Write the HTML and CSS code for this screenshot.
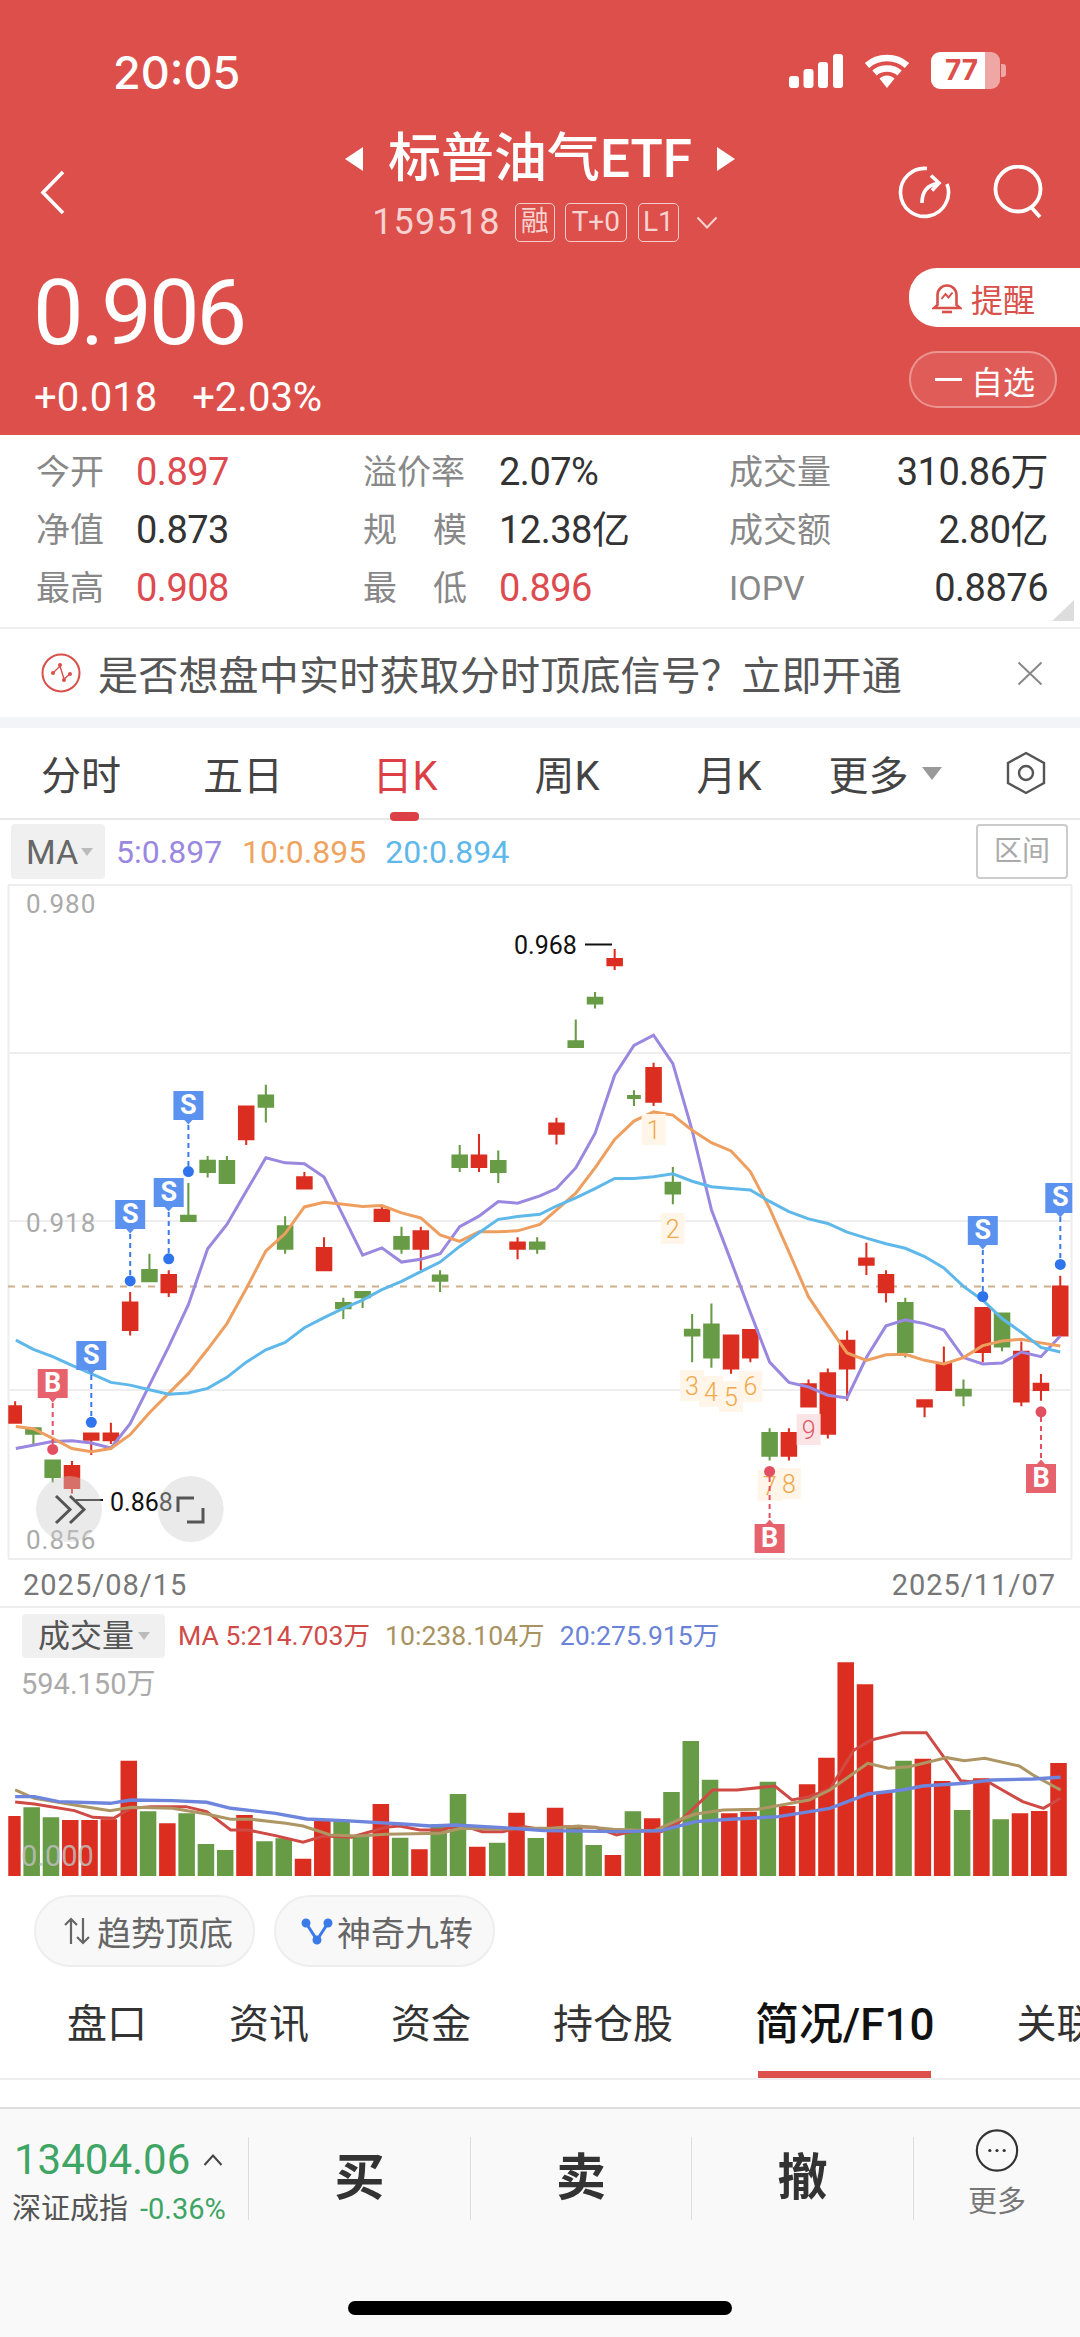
FILE: index.html
```html
<!DOCTYPE html>
<html lang="zh-CN">
<head>
  <meta charset="UTF-8">
  <meta name="viewport" content="width=device-width, initial-scale=1.0">
  <title>标普油气ETF</title>
  <link rel="stylesheet" href="styles.css">
</head>
<body>
  <div class="page">
    <header class="top">
      <div class="status">
        <span class="time">20:05</span>
        <div class="status-icons">
          <svg class="signal" width="54" height="34" viewBox="0 0 54 34"><rect x="0" y="22" width="10" height="12" rx="3"/><rect x="14.5" y="15" width="10" height="19" rx="3"/><rect x="29" y="8" width="10" height="26" rx="3"/><rect x="44" y="0" width="10" height="34" rx="3"/></svg>
          <svg class="wifi" width="46" height="34" viewBox="0 0 46 34"><path d="M3 11.5C14 1.5 32 1.5 43 11.5M10.5 19C17 13 29 13 35.5 19" fill="none" stroke="#fff" stroke-width="6.5"/><path d="M15.5 24.5C20 20.5 26 20.5 30.5 24.5L23 34z" fill="#fff"/></svg>
          <div class="battery"><span class="battery-num">77</span></div>
          <span class="battery-nub"></span>
        </div>
      </div>

      <div class="nav">
        <svg class="back" width="26" height="45" viewBox="0 0 26 45"><path d="M23 2L3 22.5 23 43" fill="none" stroke="#fff" stroke-width="3.6"/></svg>
        <div class="nav-center">
          <div class="title-row">
            <span class="tri tri-left"></span>
            <h1 class="title">标普油气ETF</h1>
            <span class="tri tri-right"></span>
          </div>
          <div class="code-row">
            <span class="code">159518</span>
            <span class="tag tag-rong">融</span>
            <span class="tag tag-t0">T+0</span>
            <span class="tag tag-l1">L1</span>
            <svg class="code-arrow" width="22" height="13" viewBox="0 0 22 13"><path d="M1.5 1.5L11 11.5 20.5 1.5" fill="none" stroke="#fff" stroke-opacity=".75" stroke-width="2"/></svg>
          </div>
        </div>
        <div class="nav-actions">
          <svg width="54" height="54" viewBox="0 0 54 54" fill="none" stroke="#fff" stroke-width="3.6"><path d="M30 3.5A24 24 0 1 0 50 19"/><path d="M25 38C25 27 30 20 41 18.5M34 10.5L42 18 35 25.5"/></svg>
          <svg width="54" height="54" viewBox="0 0 54 54" fill="none" stroke="#fff" stroke-width="3.8"><circle cx="26" cy="24" r="22.5"/><path d="M39 42L48 52"/></svg>
        </div>
      </div>

      <div class="quote">
        <div class="quote-left">
          <div class="price">0.906</div>
          <div class="change"><span>+0.018</span><span>+2.03%</span></div>
        </div>
        <div class="quote-right">
          <div class="btn-remind">
            <svg width="30" height="32" viewBox="0 0 30 32" fill="none" stroke="#d94f4a" stroke-width="2.6"><path d="M5.5 23V13a9.5 9.5 0 0 1 19 0v10l3.5 3H2z"/><path d="M10 30h10"/><path d="M9.5 17l4-5 3 3.500 4-5" stroke-width="2"/></svg>
            <span>提醒</span>
          </div>
          <div class="btn-watch"><span class="watch-dash"></span><span>自选</span></div>
        </div>
      </div>
    </header>

    <section class="stats">
      <div class="stat"><span class="stat-label">今开</span><span class="stat-val up">0.897</span></div>
      <div class="stat stat-mid"><span class="stat-label">溢价率</span><span class="stat-val">2.07%</span></div>
      <div class="stat stat-right"><span class="stat-label">成交量</span><span class="stat-val">310.86万</span></div>
      <div class="stat"><span class="stat-label">净值</span><span class="stat-val">0.873</span></div>
      <div class="stat stat-mid"><span class="stat-label spread"><i>规</i><i>模</i></span><span class="stat-val">12.38亿</span></div>
      <div class="stat stat-right"><span class="stat-label">成交额</span><span class="stat-val">2.80亿</span></div>
      <div class="stat"><span class="stat-label">最高</span><span class="stat-val up">0.908</span></div>
      <div class="stat stat-mid"><span class="stat-label spread"><i>最</i><i>低</i></span><span class="stat-val up">0.896</span></div>
      <div class="stat stat-right"><span class="stat-label">IOPV</span><span class="stat-val">0.8876</span></div>
      <span class="corner"></span>
    </section>

    <section class="notice">
      <svg width="40" height="40" viewBox="0 0 40 40" fill="none" stroke="#d94f4a" stroke-width="2"><circle cx="20" cy="20" r="18.500"/><path d="M12 20l7-7 4 13 6-5" stroke-width="1.400"/><circle cx="12" cy="20" r="2" fill="#d94f4a" stroke="none"/><circle cx="19" cy="12" r="2" fill="#d94f4a" stroke="none"/><circle cx="23" cy="27" r="2" fill="#d94f4a" stroke="none"/><circle cx="29" cy="21" r="2" fill="#d94f4a" stroke="none"/></svg>
      <span class="notice-text">是否想盘中实时获取分时顶底信号？立即开通</span>
      <svg class="notice-close" width="26" height="25" viewBox="0 0 26 25"><path d="M1.500 1.500L24.500 23.500M24.500 1.500L1.500 23.500" fill="none" stroke="#888" stroke-width="2"/></svg>
    </section>

    <div class="band"></div>

    <nav class="periods">
      <span>分时</span>
      <span>五日</span>
      <span class="period-on">日K</span>
      <span>周K</span>
      <span>月K</span>
      <span class="period-more">更多<i class="tri-down"></i></span>
      <svg class="period-gear" width="42" height="44" viewBox="0 0 42 44" fill="none" stroke="#555" stroke-width="2.400"><path d="M21 2L39 12V32L21 42 3 32V12z"/><circle cx="21" cy="22" r="7"/></svg>
    </nav>

    <div class="ma-row">
      <div class="ma-box">MA<i class="tri-small"></i></div>
      <span class="ma5">5:0.897</span>
      <span class="ma10">10:0.895</span>
      <span class="ma20">20:0.894</span>
      <div class="range-btn">区间</div>
    </div>

    <svg class="kline" width="1080" height="680" viewBox="0 880 1080 680">
      <!-- grid -->
      <path class="grid" d="M8 885H1072M8 1053H1072M8 1221H1072M8 1390H1072M8 1559H1072M8.500 885V1559M1071.500 885V1559"/>
      <path class="last-close" d="M8 1286.500H1072"/>

      <!-- candles and MA lines, in sampled coordinates -->
      <g transform="translate(0 880) scale(.34435 .4592)">
        <path class="candle-red" d="M24 1144h40v40h-40zM41 1135h6v49h-6zM185 1274h48v52h-48zM206 1265h6v71h-6zM241 1203h48v18h-48zM262 1203h6v49h-6zM298 1203h48v19h-48zM319 1182h6v46h-6zM354 918h48v64h-48zM375 897h6v95h-6zM466 858h48v42h-48zM487 850h6v58h-6zM691 491h48v76h-48zM712 491h6v86h-6zM860 645h48v29h-48zM881 636h6v38h-6zM917 799h48v53h-48zM938 778h6v74h-6zM1085 716h48v29h-48zM1106 711h6v34h-6zM1198 763h48v42h-48zM1219 755h6v95h-6zM1367 598h48v29h-48zM1388 553h6v83h-6zM1479 787h48v18h-48zM1500 778h6v48h-6zM1592 528h48v27h-48zM1613 518h6v58h-6zM1761 170h48v18h-48zM1782 150h6v46h-6zM1874 407h48v78h-48zM1895 398h6v94h-6zM2099 990h48v76h-48zM2120 990h6v85h-6zM2155 978h48v64h-48zM2176 978h6v72h-6zM2267 1202h48v54h-48zM2288 1194h6v70h-6zM2324 1096h48v53h-48zM2345 1088h6v61h-6zM2380 1072h48v136h-48zM2401 1064h6v152h-6zM2436 1001h48v65h-48zM2457 981h6v153h-6zM2492 822h48v18h-48zM2513 790h6v70h-6zM2549 858h48v42h-48zM2570 850h6v70h-6zM2661 1131h48v18h-48zM2682 1131h6v39h-6zM2717 1052h48v61h-48zM2738 1016h6v97h-6zM2830 930h48v100h-48zM2851 930h6v120h-6zM2942 1025h48v113h-48zM2963 1005h6v141h-6zM2999 1095h48v18h-48zM3020 1076h6v58h-6zM3055 883h48v111h-48zM3076 862h6v132h-6z"/>
        <path class="candle-green" d="M73 1192h48v16h-48zM94 1192h6v36h-6zM129 1262h48v40h-48zM150 1262h6v50h-6zM410 847h48v29h-48zM431 814h6v62h-6zM523 729h48v16h-48zM544 660h6v85h-6zM579 609h48v29h-48zM600 601h6v47h-6zM635 610h48v52h-48zM656 601h6v61h-6zM748 467h48v29h-48zM769 446h6v82h-6zM804 752h48v53h-48zM825 732h6v82h-6zM973 919h48v16h-48zM994 910h6v46h-6zM1029 895h48v16h-48zM1050 895h6v37h-6zM1142 775h48v30h-48zM1163 755h6v59h-6zM1254 859h48v16h-48zM1275 850h6v47h-6zM1311 598h48v29h-48zM1332 577h6v59h-6zM1423 610h48v28h-48zM1444 589h6v71h-6zM1536 787h48v18h-48zM1557 778h6v36h-6zM1648 349h48v17h-48zM1669 304h6v62h-6zM1704 254h48v17h-48zM1725 244h6v36h-6zM1821 468h40v9h-40zM1838 458h6v34h-6zM1930 657h48v28h-48zM1951 625h6v81h-6zM1986 977h48v17h-48zM2007 945h6v105h-6zM2042 966h48v76h-48zM2063 922h6v140h-6zM2211 1202h48v54h-48zM2232 1194h6v70h-6zM2605 919h48v111h-48zM2626 910h6v130h-6zM2774 1108h48v17h-48zM2795 1088h6v58h-6zM2886 942h48v76h-48zM2907 942h6v84h-6z"/>
        <polyline class="line line-ma5" points="46,1238 152,1223 209,1221 265,1226 322,1237 378,1184 434,1100 490,1016 547,925 603,803 659,750 715,678 772,605 828,616 884,618 941,647 997,732 1053,817 1109,801 1166,832 1222,826 1278,814 1335,755 1391,732 1447,700 1503,704 1568,688 1616,672 1672,627 1728,552 1785,425 1841,360 1898,338 1954,400 2010,545 2066,718 2123,830 2179,942 2235,1050 2291,1094 2348,1104 2404,1122 2460,1128 2516,1040 2573,971 2629,958 2685,966 2741,980 2798,1040 2854,1054 2910,1052 2966,1028 3023,1038 3079,993"/>
        <polyline class="line line-ma10" points="46,1190 97,1195 153,1216 209,1238 265,1245 322,1238 378,1208 434,1160 490,1118 547,1075 603,1022 659,966 715,890 772,808 828,770 884,712 941,702 997,706 1053,711 1109,709 1166,725 1222,736 1278,773 1335,787 1391,766 1447,766 1503,764 1568,750 1672,682 1728,627 1785,565 1841,525 1898,505 1954,512 2010,545 2066,572 2123,590 2179,635 2235,715 2291,810 2348,908 2404,970 2460,1030 2516,1046 2573,1034 2629,1033 2685,1046 2741,1054 2798,1040 2854,1014 2910,1004 2966,1000 3023,1008 3079,1015"/>
        <polyline class="line line-ma20" points="46,1002 97,1022 153,1038 209,1057 265,1075 322,1094 378,1100 434,1110 490,1120 547,1117 603,1107 659,1083 715,1050 772,1023 828,1007 884,975 941,953 997,933 1053,915 1109,892 1166,874 1222,853 1278,832 1335,798 1391,768 1447,739 1503,733 1568,728 1616,710 1672,692 1728,672 1785,650 1841,650 1898,646 1954,640 2010,656 2066,668 2123,672 2179,675 2235,700 2291,722 2348,738 2404,748 2460,767 2516,780 2573,792 2629,802 2685,820 2741,845 2798,885 2854,915 2910,955 2966,985 3023,1018 3079,1028"/>
      </g>

      <!-- axis labels -->
      <text class="axis" x="26" y="913">0.980</text>
      <text class="axis" x="26" y="1232">0.918</text>
      <text class="axis" x="26" y="1549">0.856</text>

      <!-- sequence numbers -->
      <g class="seq">
        <rect x="641.600" y="1114" width="24" height="31"/><text x="653.600" y="1139">1</text>
        <rect x="660.600" y="1213" width="24" height="31"/><text x="672.600" y="1238">2</text>
        <rect x="680" y="1370" width="24" height="31"/><text x="692" y="1395">3</text>
        <rect x="699" y="1376" width="24" height="31"/><text x="711" y="1401">4</text>
        <rect x="719" y="1381" width="24" height="31"/><text x="731" y="1406">5</text>
        <rect x="738.400" y="1371" width="24" height="31"/><text x="750.400" y="1395">6</text>
        <rect x="757.600" y="1470" width="24" height="31"/><text x="769.600" y="1495">7</text>
        <rect x="777" y="1468" width="24" height="31"/><text x="789" y="1493">8</text>
      </g>
      <g class="seq seq-red"><rect x="796.600" y="1414" width="24" height="31"/><text x="808.600" y="1439">9</text></g>

      <!-- sell flags -->
      <path class="dash-s" d="M91.300 1375V1417M130.200 1234V1276M168.700 1212V1254M188.400 1125V1167M982.800 1250V1292M1060.300 1217V1259"/>
      <g class="dot-s"><circle cx="91.300" cy="1422.300" r="5.500"/><circle cx="130.200" cy="1280.900" r="5.500"/><circle cx="168.700" cy="1258.800" r="5.500"/><circle cx="188.400" cy="1171.600" r="5.500"/><circle cx="982.800" cy="1296.500" r="5.500"/><circle cx="1060.300" cy="1264.400" r="5.500"/></g>
      <g class="flag-s" transform="translate(91.300 1341)"><path d="M-15 0h30v29h-11l-4 4.500-4-4.500h-11z"/><text y="23">S</text></g>
      <g class="flag-s" transform="translate(130.200 1200)"><path d="M-15 0h30v29h-11l-4 4.500-4-4.500h-11z"/><text y="23">S</text></g>
      <g class="flag-s" transform="translate(168.700 1178)"><path d="M-15 0h30v29h-11l-4 4.500-4-4.500h-11z"/><text y="23">S</text></g>
      <g class="flag-s" transform="translate(188.400 1091)"><path d="M-15 0h30v29h-11l-4 4.500-4-4.500h-11z"/><text y="23">S</text></g>
      <g class="flag-s" transform="translate(982.800 1216)"><path d="M-15 0h30v29h-11l-4 4.500-4-4.500h-11z"/><text y="23">S</text></g>
      <g class="flag-s" transform="translate(1060.300 1183)"><path d="M-15 0h27v30h-8l-4 4.500-4-4.500h-11z"/><text y="23">S</text></g>

      <!-- buy flags -->
      <path class="dash-b" d="M52.700 1403V1444M769.600 1477V1519M1041 1417V1459"/>
      <g class="dot-b"><circle cx="52.700" cy="1449.400" r="5.500"/><circle cx="769.600" cy="1471.400" r="5.500"/><circle cx="1041" cy="1411.800" r="5.500"/></g>
      <g class="flag-b" transform="translate(52.700 1369)"><path d="M-15 0h30v29h-11l-4 4.500-4-4.500h-11z"/><text y="23">B</text></g>
      <g class="flag-b" transform="translate(769.600 1524)"><path d="M-15 0h11l4-4.500 4 4.500h11v29h-30z"/><text y="23">B</text></g>
      <g class="flag-b" transform="translate(1041 1464)"><path d="M-15 0h11l4-4.500 4 4.500h11v29h-30z"/><text y="23">B</text></g>

      <!-- high and low -->
      <path class="hl-line" d="M585 944.500H612M76 1500H103"/>
      <text class="hl" x="514" y="954">0.968</text>
      <text class="hl" x="110" y="1511">0.868</text>

      <!-- round buttons -->
      <circle class="round-btn" cx="69" cy="1509" r="33"/>
      <circle class="round-btn" cx="190.700" cy="1509" r="33"/>
      <path class="round-icon" d="M56 1496L70 1509.500 56 1523M70 1496L84 1509.500 70 1523M178 1512V1498H194M203 1508V1522H187"/>
    </svg>

    <div class="date-row"><span>2025/08/15</span><span>2025/11/07</span></div>

    <div class="vol-row">
      <div class="vol-box">成交量<i class="tri-small"></i></div>
      <span class="vol-ma5">MA 5:214.703万</span>
      <span class="vol-ma10">10:238.104万</span>
      <span class="vol-ma20">20:275.915万</span>
    </div>

    <div class="vol-chart">
      <svg width="1080" height="218" viewBox="0 1660 1080 218">
        <g transform="translate(0 1590) scale(.6887 .3333)">
          <path class="candle-red" d="M12 678h18V858h-18zM90 690h24V858h-24zM118 690h24V858h-24zM146 688h24V858h-24zM175 512h24V858h-24zM231 700h24V858h-24zM343 675h24V858h-24zM428 806h24V858h-24zM456 688h24V858h-24zM541 642h24V858h-24zM597 778h24V858h-24zM681 770h24V858h-24zM738 668h24V858h-24zM794 653h24V858h-24zM878 795h24V858h-24zM935 685h24V858h-24zM1047 670h24V858h-24zM1075 665h24V858h-24zM1131 648h24V858h-24zM1160 583h24V858h-24zM1188 503h24V858h-24zM1216 217h24V858h-24zM1244 283h24V858h-24zM1272 605h24V858h-24zM1328 506h24V858h-24zM1356 573h24V858h-24zM1413 565h24V858h-24zM1469 670h24V858h-24zM1497 663h24V858h-24zM1525 519h24V858h-24z"/>
          <path class="candle-green" d="M34 652h24V858h-24zM62 682h24V858h-24zM203 664h24V858h-24zM259 670h24V858h-24zM287 762h24V858h-24zM315 780h24V858h-24zM372 754h24V858h-24zM400 745h24V858h-24zM484 692h24V858h-24zM512 735h24V858h-24zM569 743h24V858h-24zM625 703h24V858h-24zM653 612h24V858h-24zM710 758h24V858h-24zM766 744h24V858h-24zM822 712h24V858h-24zM850 765h24V858h-24zM907 664h24V858h-24zM963 606h24V858h-24zM991 453h24V858h-24zM1019 569h24V858h-24zM1103 575h24V858h-24zM1300 512h24V858h-24zM1385 660h24V858h-24zM1441 688h24V858h-24z"/>
          <polyline class="line line-vol5" points="22,636 50,642 108,662 135,682 165,685 190,655 220,650 270,650 300,665 335,720 360,720 400,737 440,757 470,738 510,742 560,712 580,708 610,720 640,720 670,705 700,725 730,725 760,710 790,720 820,710 865,712 895,735 925,722 960,725 985,698 1035,600 1070,600 1125,588 1150,630 1175,620 1205,597 1240,480 1265,450 1310,428 1345,428 1395,572 1410,575 1430,570 1485,635 1515,655 1540,625"/>
          <polyline class="line line-vol10" points="22,600 50,625 108,645 160,662 190,652 250,655 300,672 335,688 365,688 415,700 440,708 480,735 520,738 560,733 640,730 670,715 720,717 760,715 800,715 840,708 890,718 950,722 985,690 1010,672 1050,660 1100,658 1175,630 1205,600 1260,520 1290,535 1320,530 1375,503 1400,512 1430,505 1480,528 1500,555 1540,600"/>
          <polyline class="line line-vol20" points="22,620 50,620 85,635 160,640 190,630 250,632 300,637 335,655 400,670 445,687 500,692 590,703 625,708 660,705 730,713 790,722 900,725 960,722 1010,695 1060,688 1130,680 1205,655 1260,612 1310,600 1340,588 1400,580 1440,570 1500,567 1540,562"/>
        </g>
        <text class="vol-max" x="21" y="1694">594.150万</text>
        <text class="vol-min" x="21" y="1866">0.000</text>
      </svg>
    </div>

    <div class="chips">
      <div class="chip">
        <svg width="36" height="32" viewBox="0 0 36 32" fill="none" stroke="#666" stroke-width="2.200"><path d="M12 29V4M6 10L12 4 18 10M24 3V28M18 22L24 28 30 22"/></svg>
        <span>趋势顶底</span>
      </div>
      <div class="chip">
        <svg width="36" height="32" viewBox="0 0 36 32" fill="none" stroke="#3a7be8" stroke-width="3"><path d="M7 8L18 25 29 8"/><circle cx="7" cy="8" r="3" fill="#3a7be8"/><circle cx="18" cy="25" r="3" fill="#3a7be8"/><circle cx="29" cy="8" r="3" fill="#3a7be8"/></svg>
        <span>神奇九转</span>
      </div>
    </div>

    <nav class="tabs">
      <span>盘口</span>
      <span>资讯</span>
      <span>资金</span>
      <span>持仓股</span>
      <span class="tab-on">简况/F10</span>
      <span>关联</span>
    </nav>

    <div class="gap"></div>

    <footer class="footer">
      <div class="index">
        <div class="index-top"><span class="index-num">13404.06</span><svg width="20" height="12" viewBox="0 0 20 12"><path d="M1.500 11L10 1.500 18.500 11" fill="none" stroke="#444" stroke-width="2"/></svg></div>
        <div class="index-bottom"><span class="index-name">深证成指</span><span class="index-pct">-0.36%</span></div>
      </div>
      <div class="action">买</div>
      <div class="action">卖</div>
      <div class="action">撤</div>
      <div class="more">
        <svg width="48" height="48" viewBox="0 0 48 48"><circle cx="24" cy="24" r="22.500" fill="none" stroke="#333" stroke-width="2.400"/><circle cx="16" cy="24" r="1.800" fill="#333"/><circle cx="24" cy="24" r="1.800" fill="#333"/><circle cx="32" cy="24" r="1.800" fill="#333"/></svg>
        <span>更多</span>
      </div>
      <div class="home-bar"></div>
    </footer>
  </div>
</body>
</html>
```

FILE: styles.css
```css
* {
  box-sizing: border-box;
}
body {
  margin: 0;
  padding: 0;
  background-color: #fff;
  font-family: Roboto, "Noto Sans CJK SC", sans-serif;
}
i {
  font-style: normal;
}
.page {
  position: relative;
  width: 1080px;
  height: 2337px;
  overflow: hidden;
  display: flex;
  flex-direction: column;
}

/* red header */
.top {
  height: 435px;
  background-color: #dd4f4a;
  color: #fff;
}
.status {
  height: 125px;
  padding: 46px 74px 0 113px;
  display: flex;
  justify-content: space-between;
  align-items: flex-start;
}
.time {
  font-family: Inter, sans-serif;
  font-size: 45px;
  font-weight: 500;
  line-height: 54px;
}
.status-icons {
  display: flex;
  align-items: center;
  padding-top: 6px;
}
.signal {
  fill: #fff;
}
.wifi {
  margin-left: 21px;
}
.battery {
  width: 69px;
  height: 37px;
  margin-left: 21px;
  border-radius: 9px;
  background: linear-gradient(90deg, #fff 78%, rgba(255, 255, 255, 0.5) 78%);
  text-align: center;
}
.battery-num {
  font-family: Inter, sans-serif;
  display: block;
  font-size: 28px;
  font-weight: 700;
  line-height: 37px;
  color: #dd4f4a;
  padding-right: 8px;
}
.battery-nub {
  width: 5px;
  height: 13px;
  margin-left: 1px;
  border-radius: 0 3px 3px 0;
  background: rgba(255, 255, 255, 0.5);
}

.nav {
  height: 120px;
  display: grid;
  grid-template-columns: 1fr auto 1fr;
  align-items: start;
}
.back {
  margin: 45px 0 0 40px;
}
.nav-center {
  display: flex;
  flex-direction: column;
  align-items: center;
}
.title-row {
  display: flex;
  align-items: center;
  gap: 25px;
  height: 68px;
}
.title {
  margin: 0;
  font-size: 53px;
  font-weight: 500;
  line-height: 68px;
  white-space: nowrap;
}
.tri {
  width: 0;
  height: 0;
  border-top: 12px solid transparent;
  border-bottom: 12px solid transparent;
}
.tri-left {
  border-right: 18px solid #fff;
}
.tri-right {
  border-left: 18px solid #fff;
}
.code-row {
  display: flex;
  align-items: center;
  height: 40px;
  margin: 9px 0 0 10px;
  color: rgba(255, 255, 255, 0.75);
}
.code {
  font-size: 36px;
  letter-spacing: 1.200px;
  margin-right: 14px;
}
.tag {
  height: 39px;
  border: 1px solid rgba(255, 255, 255, 0.7);
  border-radius: 5px;
  font-size: 28px;
  line-height: 36px;
  text-align: center;
}
.tag-rong {
  width: 40px;
  margin-right: 10px;
}
.tag-t0 {
  width: 62px;
  margin-right: 11px;
}
.tag-l1 {
  width: 41px;
  margin-right: 17px;
}
.nav-actions {
  display: flex;
  justify-content: flex-end;
  gap: 41px;
  margin: 40px 34px 0 0;
}

.quote {
  display: flex;
  justify-content: space-between;
  padding: 23px 0 0 34px;
}
.price {
  margin: 2px 0 0 -1px;
  font-size: 90px;
  line-height: 88px;
  font-weight: 400;
  letter-spacing: -3px;
}
.change {
  display: flex;
  gap: 35px;
  margin-top: 17px;
  font-size: 40px;
  line-height: 46px;
}
.quote-right {
  width: 171px;
  display: flex;
  flex-direction: column;
}
.btn-remind {
  height: 59px;
  padding-left: 23px;
  display: flex;
  align-items: center;
  gap: 9px;
  background: #fff;
  border-radius: 28px 0 0 28px;
  color: #d94f4a;
  font-size: 32px;
}
.btn-watch {
  width: 148px;
  height: 57px;
  margin-top: 24px;
  padding-left: 24px;
  display: flex;
  align-items: center;
  gap: 9px;
  border: 2px solid rgba(255, 255, 255, 0.35);
  border-radius: 28px;
  background: rgba(255, 255, 255, 0.08);
  font-size: 32px;
}
.watch-dash {
  width: 27px;
  height: 3px;
  background: #fff;
}

/* stats */
.stats {
  position: relative;
  height: 194px;
  padding: 8px 32px 0 36px;
  display: grid;
  grid-template-columns: 327px 366px 319px;
  grid-auto-rows: 58px;
  align-items: center;
  border-bottom: 2px solid #eee;
}
.stat {
  display: flex;
  align-items: center;
}
.stat-label {
  width: 100px;
  font-size: 34px;
  color: #888;
  line-height: 44px;
}
.stat-mid .stat-label {
  width: 104px;
  margin-right: 32px;
}
.spread {
  display: flex;
  justify-content: space-between;
}
.stat-val {
  font-size: 38px;
  font-weight: 400;
  color: #333;
  line-height: 44px;
  letter-spacing: -0.500px;
}
.stat-right {
  justify-content: space-between;
}
.stat-right .stat-label {
  width: auto;
}
.up {
  color: #dd4a50;
}
.corner {
  position: absolute;
  right: 6px;
  bottom: 6px;
  width: 0;
  height: 0;
  border-left: 22px solid transparent;
  border-bottom: 21px solid #ddd;
}

/* notice */
.notice {
  height: 88px;
  padding: 0 37px 0 41px;
  display: flex;
  align-items: center;
}
.notice-text {
  margin-left: 17px;
  font-size: 40px;
  letter-spacing: 0.200px;
  color: #555;
  white-space: nowrap;
}
.notice-close {
  margin-left: auto;
}
.band {
  height: 11px;
  background-color: #f3f4f8;
}

/* period tabs */
.periods {
  position: relative;
  height: 92px;
  display: grid;
  grid-template-columns: repeat(6, 162px) 1fr;
  align-items: center;
  border-bottom: 2px solid #e8e8e8;
  font-size: 40px;
  color: #444;
  text-align: center;
}
.period-on {
  position: relative;
  color: #dd3f46;
}
.period-on::after {
  content: "";
  position: absolute;
  left: 66px;
  bottom: -19px;
  width: 29px;
  height: 9px;
  border-radius: 4px;
  background: #dd3f46;
}
.period-more {
  display: flex;
  align-items: center;
  justify-content: center;
  gap: 13px;
  margin-left: -12px;
}
.tri-down {
  width: 0;
  height: 0;
  border-left: 10px solid transparent;
  border-right: 10px solid transparent;
  border-top: 13px solid #999;
}
.period-gear {
  margin-left: 33px;
}

/* MA legend */
.ma-row {
  position: relative;
  height: 60px;
  padding: 4px 12px 0 11px;
  display: flex;
  align-items: flex-start;
  gap: 20px;
  font-size: 32px;
  line-height: 56px;
}
.ma-box {
  width: 94px;
  height: 55px;
  margin-right: -9px;
  padding-left: 15px;
  display: flex;
  align-items: center;
  gap: 3px;
  background: #f0f0f0;
  border-radius: 4px;
  color: #666;
  font-size: 34px;
}
.tri-small {
  width: 0;
  height: 0;
  border-left: 6px solid transparent;
  border-right: 6px solid transparent;
  border-top: 8px solid #bbb;
}
.ma5 {
  color: #9a87e0;
}
.ma10 {
  color: #eea45e;
}
.ma20 {
  color: #5eb8ea;
  margin-left: -1px;
}
.range-btn {
  width: 92px;
  height: 55px;
  margin-left: auto;
  border: 2px solid #ccc;
  border-radius: 4px;
  font-size: 28px;
  line-height: 51px;
  text-align: center;
  color: #aaa;
}

/* kline */
.kline {
  display: block;
  flex: none;
}
.kline text, .vol-chart text {
  font-family: Roboto, "Noto Sans CJK SC", sans-serif;
}
.grid {
  fill: none;
  stroke: #eee;
  stroke-width: 2;
}
.last-close {
  fill: none;
  stroke: #cdb08c;
  stroke-width: 2;
  stroke-dasharray: 7 7;
}
.candle-red {
  fill: #dc2e20;
}
.candle-green {
  fill: #679b46;
}
.line {
  fill: none;
  stroke-width: 3;
  vector-effect: non-scaling-stroke;
}
.line-ma5 {
  stroke: #9a87e0;
}
.line-ma10 {
  stroke: #ee9f60;
}
.line-ma20 {
  stroke: #5eb8ea;
}
.axis {
  font-size: 26px;
  letter-spacing: 1px;
  fill: #aaa;
}
.seq rect {
  fill: #fff5e8;
}
.seq text {
  font-size: 25px;
  font-weight: 300;
  fill: #f0a848;
  text-anchor: middle;
}
.seq-red rect {
  fill: #fbe4e6;
}
.seq-red text {
  fill: #e05a68;
}
.dash-s, .dash-b {
  fill: none;
  stroke-width: 2;
  stroke-dasharray: 5 4;
}
.dash-s {
  stroke: #3a7be8;
}
.dash-b {
  stroke: #e2505f;
}
.dot-s {
  fill: #2f74ec;
}
.dot-b {
  fill: #e2505f;
}
.flag-s path {
  fill: #5b92f0;
}
.flag-b path {
  fill: #e6636e;
}
.flag-s text, .flag-b text {
  font-size: 27px;
  font-weight: 700;
  fill: #fff;
  text-anchor: middle;
}
.hl-line {
  fill: none;
  stroke: #111;
  stroke-width: 2;
}
.hl {
  font-size: 25px;
  fill: #111;
}
.round-btn {
  fill: rgba(205, 205, 205, 0.42);
}
.round-icon {
  fill: none;
  stroke: #555;
  stroke-width: 3;
}

.date-row {
  height: 48px;
  padding: 8px 24px 0 23px;
  display: flex;
  justify-content: space-between;
  border-bottom: 2px solid #eee;
  font-size: 29px;
  line-height: 34px;
  letter-spacing: 1px;
  color: #777;
}

/* volume */
.vol-row {
  height: 52px;
  padding: 6px 0 0 22px;
  display: flex;
  align-items: flex-start;
  gap: 15px;
  font-size: 26.600px;
  line-height: 44px;
}
.vol-box {
  width: 143px;
  height: 44px;
  margin-right: -2px;
  padding-left: 16px;
  display: flex;
  align-items: center;
  gap: 4px;
  background: #f0f0f0;
  border-radius: 4px;
  color: #555;
  font-size: 32px;
}
.vol-ma5 {
  color: #d04b48;
}
.vol-ma10 {
  color: #a8925f;
}
.vol-ma20 {
  color: #6a82d8;
}
.vol-chart {
  height: 218px;
}
.vol-chart svg {
  display: block;
}
.line-vol5 {
  stroke: #cf4a44;
}
.line-vol10 {
  stroke: #ae9664;
}
.line-vol20 {
  stroke: #6d85dc;
  stroke-width: 3.400;
}
.vol-max {
  font-size: 29px;
  fill: #aaa;
}
.vol-min {
  font-size: 29px;
  fill: rgba(190, 190, 190, 0.85);
}

/* chips */
.chips {
  height: 89px;
  padding: 17px 0 0 34px;
  display: flex;
  gap: 19px;
}
.chip {
  width: 221px;
  height: 72px;
  padding-left: 23px;
  display: flex;
  align-items: center;
  gap: 2px;
  background: #f8f8f8;
  border: 2px solid #eee;
  border-radius: 36px;
  font-size: 34px;
  color: #666;
}

/* bottom tabs */
.tabs {
  height: 113px;
  padding: 31px 0 0 67px;
  display: flex;
  gap: 82px;
  align-items: flex-start;
  border-bottom: 2px solid #eee;
  font-size: 40px;
  line-height: 54px;
  color: #333;
  white-space: nowrap;
}
.tab-on {
  position: relative;
  color: #111;
  font-size: 44px;
  font-weight: 500;
}
.tab-on::after {
  content: "";
  position: absolute;
  left: 3px;
  right: 3px;
  top: 73px;
  height: 7px;
  background: #dd4f4a;
}
.gap {
  height: 27px;
}

/* footer */
.footer {
  position: relative;
  flex: 1;
  padding: 28px 0 0 0;
  display: grid;
  grid-template-columns: 248px 222px 221px 222px 1fr;
  grid-auto-rows: 83px;
  background: #f9f9f9;
  border-top: 2px solid #ddd;
}
.index {
  padding-left: 14px;
}
.index-top {
  display: flex;
  align-items: center;
  gap: 13px;
}
.index-num {
  font-size: 42px;
  line-height: 46px;
  color: #3fa565;
}
.index-bottom {
  display: flex;
  gap: 12px;
  margin: 8px 0 0 -2px;
  font-size: 29px;
  line-height: 36px;
}
.index-name {
  color: #555;
}
.index-pct {
  color: #3fa565;
}
.action {
  border-left: 1px solid #ddd;
  font-size: 50px;
  font-weight: 700;
  line-height: 83px;
  text-align: center;
  color: #333;
}
.more {
  border-left: 1px solid #ddd;
  display: flex;
  flex-direction: column;
  align-items: center;
  font-size: 29px;
  color: #777;
  line-height: 36px;
}
.more svg {
  margin-top: -8px;
  margin-bottom: 12px;
}
.home-bar {
  position: absolute;
  left: 348px;
  bottom: 22px;
  width: 384px;
  height: 14px;
  border-radius: 7px;
  background: #000;
}
```
